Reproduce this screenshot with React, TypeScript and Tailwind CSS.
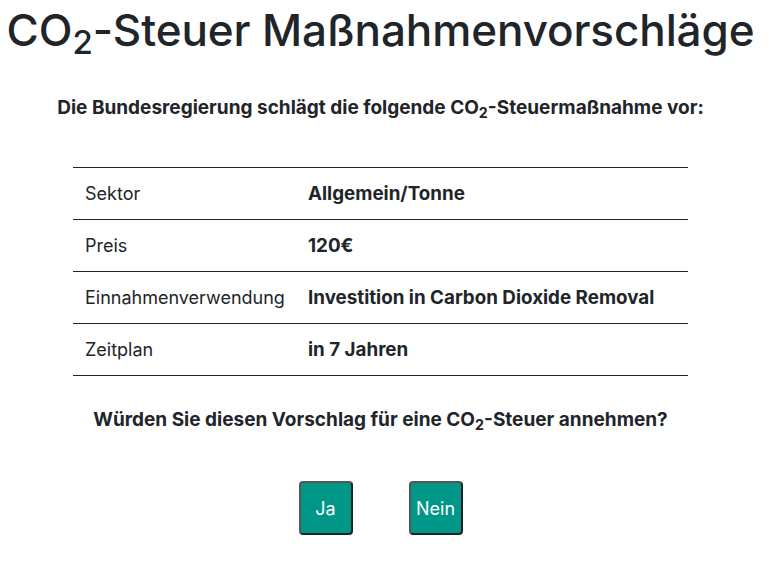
import React from "react";

const Co2 = () => (
  <>
    CO<sub className="text-[0.75em] relative top-[0.25em] align-baseline leading-none">2</sub>
  </>
);

const rows: [string, string][] = [
  ["Sektor", "Allgemein/Tonne"],
  ["Preis", "120€"],
  ["Einnahmenverwendung", "Investition in Carbon Dioxide Removal"],
  ["Zeitplan", "in 7 Jahren"],
];

export default function App() {
  return (
    <div className="min-h-[563px] w-[761px] bg-white text-[#212529] font-['Inter',sans-serif] flex flex-col items-center">
      <h1 className="text-[44px] leading-[60px] font-medium tracking-[-0.1px]">
        <Co2 />-Steuer Maßnahmenvorschläge
      </h1>
      <p className="mt-[35px] text-[19px] font-bold leading-[26px]">
        Die Bundesregierung schlägt die folgende <Co2 />-Steuermaßnahme vor:
      </p>
      <table className="mt-[46px] w-[615px] text-[18px] leading-[27px] border-collapse">
        <tbody>
          {rows.map(([k, v], i) => (
            <tr key={k} className={"border-b border-[#212529]" + (i === 0 ? " border-t" : "")}>
              <td className="px-[12px] py-[12px] w-[235px] whitespace-nowrap">{k}</td>
              <td className="px-[0px] py-[12px] font-bold text-[18.8px]">{v}</td>
            </tr>
          ))}
        </tbody>
      </table>
      <p className="mt-[31px] text-[19px] font-bold leading-[26px]">
        Würden Sie diesen Vorschlag für eine <Co2 />-Steuer annehmen?
      </p>
      <div className="mt-[48px] flex gap-[56px]">
        <button className="w-[54px] h-[54px] bg-[#009688] text-white text-[18px] rounded-[4px] border-2 border-[#555] border-b-[#222] border-r-[#222]">
          Ja
        </button>
        <button className="w-[54px] h-[54px] bg-[#009688] text-white text-[18px] rounded-[4px] border-2 border-[#555] border-b-[#222] border-r-[#222]">
          Nein
        </button>
      </div>
    </div>
  );
}
